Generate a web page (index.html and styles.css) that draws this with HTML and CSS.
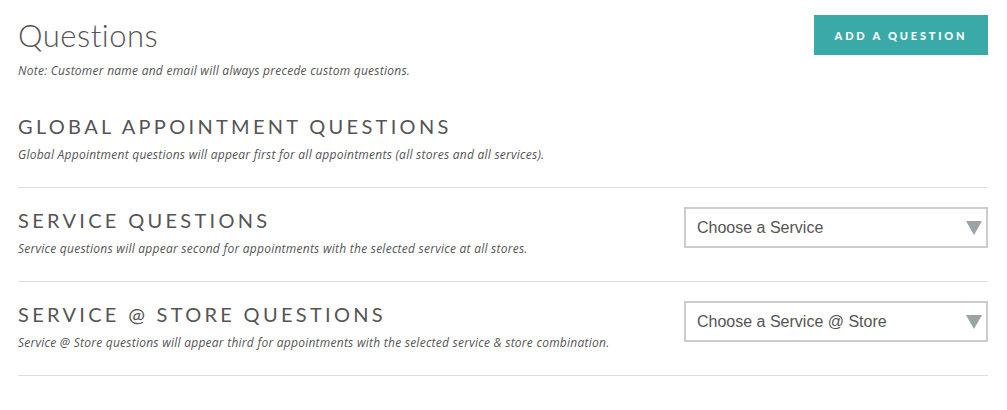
FILE: index.html
```html
<!DOCTYPE html>
<html>
<head>
<meta charset="utf-8">
<link rel="stylesheet" href="styles.css">
</head>
<body>
<div class="page">
  <header class="header">
    <div>
      <h1 class="title">Questions</h1>
      <p class="note">Note: Customer name and email will always precede custom questions.</p>
    </div>
    <button class="btn">ADD A QUESTION</button>
  </header>

  <section class="section section-first">
    <div class="info">
      <h2 class="heading">GLOBAL APPOINTMENT QUESTIONS</h2>
      <p class="desc">Global Appointment questions will appear first for all appointments (all stores and all services).</p>
    </div>
  </section>

  <section class="section">
    <div class="info">
      <h2 class="heading">SERVICE QUESTIONS</h2>
      <p class="desc">Service questions will appear second for appointments with the selected service at all stores.</p>
    </div>
    <div class="select">
      <span class="select-text">Choose a Service</span>
      <svg class="arrow" width="16" height="14" viewBox="0 0 16 14"><polygon points="0,0 16,0 8,14" fill="#9ca3a6"/></svg>
    </div>
  </section>

  <section class="section">
    <div class="info">
      <h2 class="heading">SERVICE @ STORE QUESTIONS</h2>
      <p class="desc">Service @ Store questions will appear third for appointments with the selected service &amp; store combination.</p>
    </div>
    <div class="select">
      <span class="select-text">Choose a Service @ Store</span>
      <svg class="arrow" width="16" height="14" viewBox="0 0 16 14"><polygon points="0,0 16,0 8,14" fill="#9ca3a6"/></svg>
    </div>
  </section>
</div>
</body>
</html>
```

FILE: styles.css
```css
* { box-sizing: border-box; }
html, body { margin: 0; padding: 0; background: #fff; }
body { font-family: Lato, "Open Sans", sans-serif; color: #555; }
.page { width: 970px; margin-left: 18px; }
.header { display: flex; justify-content: space-between; align-items: flex-start; padding-top: 15px; }
.title { margin: 1px 0 0; font-weight: 300; font-size: 31px; line-height: 38px; color: #555; letter-spacing: 0.5px; }
.note { margin: 9px 0 0; font-family: "Open Sans", sans-serif; font-style: italic; font-size: 12px; line-height: 15px; letter-spacing: 0.25px; color: #555; }
.btn { width: 174px; height: 40px; background: #3aaaa8; color: #fff; border: 0; font-family: Lato, sans-serif; font-weight: 900; font-size: 11px; letter-spacing: 2.8px; padding: 0; cursor: pointer; }
.section { display: flex; justify-content: space-between; align-items: flex-start; border-bottom: 1px solid #dedede; padding: 20px 0 25px; }
.section-first { padding-top: 36px; }
.heading { margin: 0; font-weight: 400; font-size: 20px; line-height: 24px; letter-spacing: 3.3px; color: #555; }
.desc { margin: 9px 0 0; font-family: "Open Sans", sans-serif; font-style: italic; font-size: 12px; line-height: 15px; letter-spacing: 0.25px; color: #555; }
.select { width: 304px; height: 41px; margin-top: -1px; border: 2px solid #cccccc; display: flex; align-items: center; justify-content: space-between; padding: 0 4px 0 11px; }
.select-text { font-family: "Liberation Sans", Arial, sans-serif; font-size: 16px; color: #555; }
.arrow { display: block; }
```
